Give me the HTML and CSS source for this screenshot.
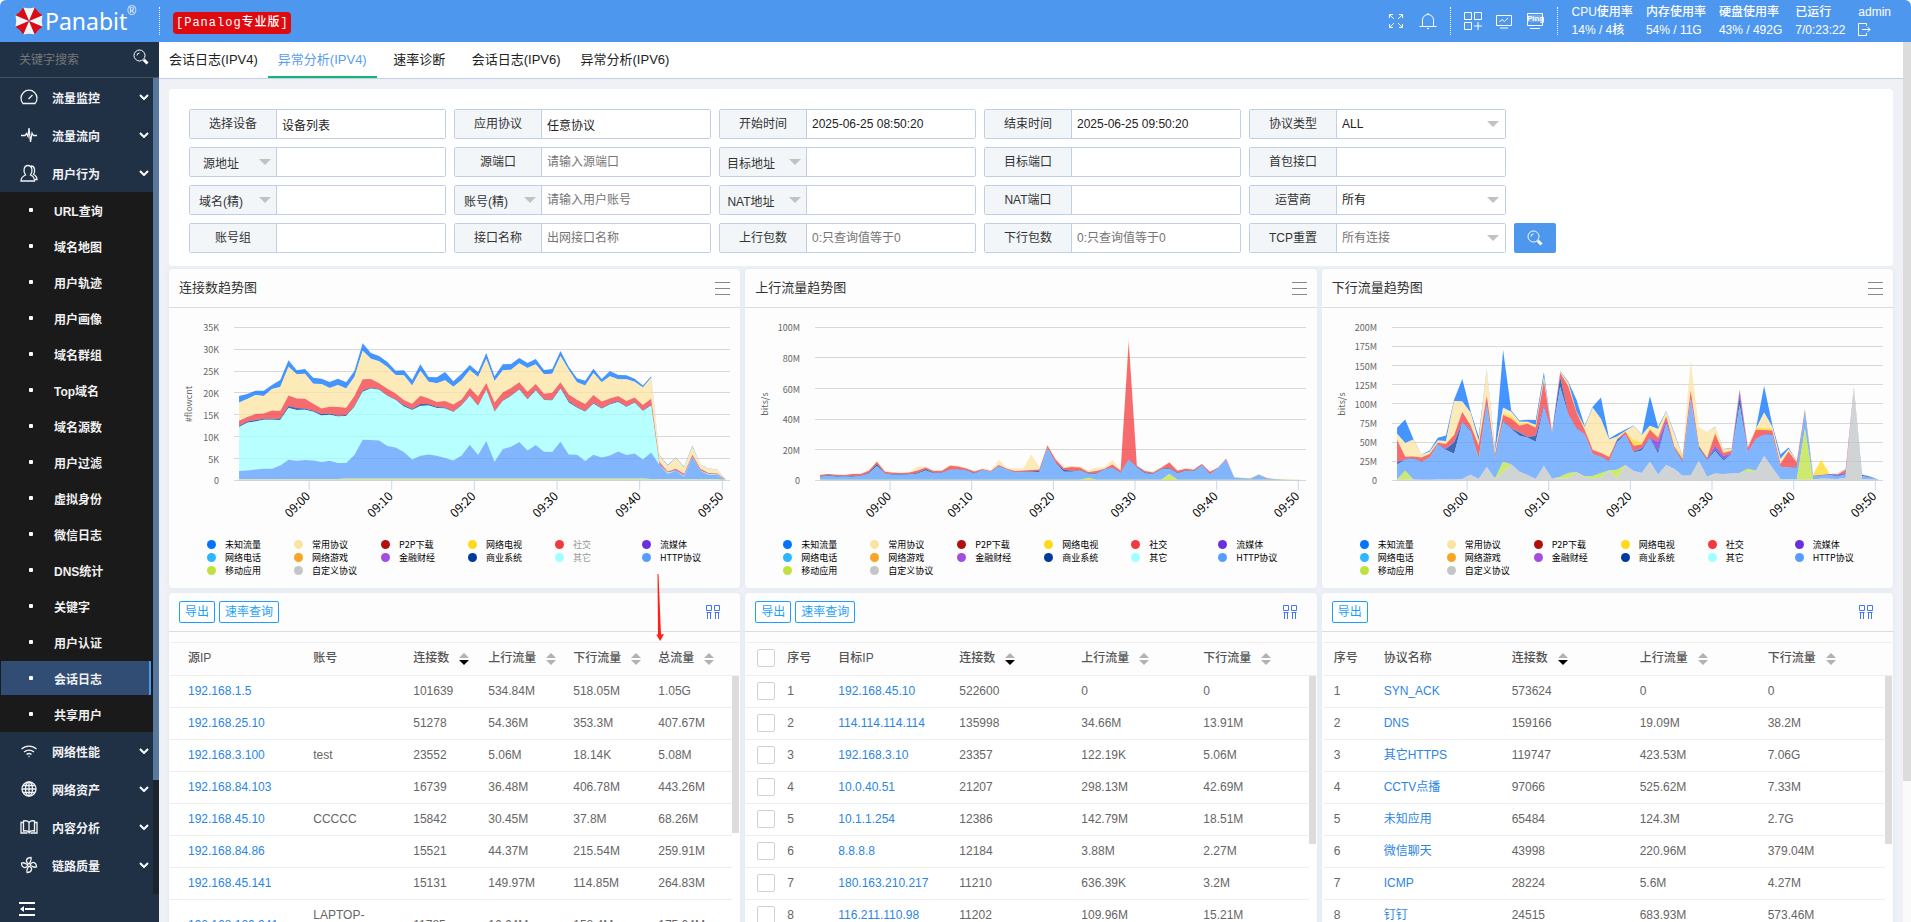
FILE: index.html
```html
<!DOCTYPE html>
<html lang="zh-CN">
<head>
    <meta charset="UTF-8">
    <meta name="viewport" content="width=device-width, initial-scale=1.0">
    <title>Panabit</title>
    <link rel="stylesheet" href="styles.css">
</head>
<body>
    <header class="header">
        <div class="logo">
            <svg class="logo-mark" viewBox="0 0 28 28">
                <g fill="#f4f4f4">
                    <path d="M14 14 8.2 0.5Q14 2 19.8 0.5z"/>
                    <path d="M14 14 27.5 8.2Q26 14 27.5 19.8z"/>
                    <path d="M14 14 19.8 27.5Q14 26 8.2 27.5z"/>
                    <path d="M14 14 0.5 19.8Q2 14 0.5 8.2z"/>
                </g>
                <g fill="#df0a10">
                    <path d="M14 14 8.2 0.5Q5.5 5.5 0.5 8.2z"/>
                    <path d="M14 14 19.8 0.5Q22.5 5.5 27.5 8.2z"/>
                    <path d="M14 14 27.5 19.8Q22.5 22.5 19.8 27.5z"/>
                    <path d="M14 14 8.2 27.5Q5.5 22.5 0.5 19.8z"/>
                </g>
            </svg>
            <span class="logo-name">Panabit</span><sup class="logo-reg">®</sup>
        </div>
        <div class="dots"></div>
        <span class="edition">[Panalog专业版]</span>
        <div class="header-tools">
            <svg class="tool" viewBox="0 0 18 18"><path d="M7 7 3 3M11 7l4-4M7 11l-4 4M11 11l4 4M2.5 6V2.500H6M12 2.500h3.500V6M2.500 12v3.500H6M12 15.500h3.500V12"/></svg>
            <svg class="tool tool-bell" viewBox="0 0 18 18"><path d="M0.500 14.500h17M3.500 14.500V8a5.500 5.500 0 0 1 11 0v6.500M9 2.500V1M8 16.500h2"/></svg>
            <div class="dots"></div>
            <svg class="tool tool-apps" viewBox="0 0 18 18"><path d="M0.500 0.500h7v7h-7zM10.500 0.500h7v7h-7zM0.500 10.500h7v7h-7zM14 10v8M10 14h8"/></svg>
            <svg class="tool tool-screen" viewBox="0 0 18 18"><path d="M1.500 3.500h15v10h-15zM5 16h8M4.500 10 7 7.500l2.500 2L13 6"/></svg>
            <svg class="tool tool-ping" viewBox="0 0 18 18"><path d="M1.500 1.500h15v12h-15zM4 16.500h10"/><path d="M1 3h16v7H1z" fill="#fff" stroke="none" opacity="0.2"/><text x="1" y="9">Ping</text></svg>
            <div class="dots"></div>
        </div>
        <dl class="status">
            <div><dt>CPU使用率</dt><dd>14% / 4核</dd></div>
            <div><dt>内存使用率</dt><dd>54% / 11G</dd></div>
            <div><dt>硬盘使用率</dt><dd>43% / 492G</dd></div>
            <div><dt>已运行</dt><dd>7/0:23:22</dd></div>
            <div><dt>admin</dt><dd><svg class="logout" viewBox="0 0 13 13"><path d="M8.500 3V0.500h-8v12h8V10M4 6.500h8M9.500 4l2.500 2.500L9.500 9"/></svg></dd></div>
        </dl>
    </header>

    <div class="layout">
        <aside class="sidebar">
            <div class="menu-search">
                <input type="text" placeholder="关键字搜索" aria-label="关键字搜索">
                <svg viewBox="0 0 16 16"><circle cx="6.500" cy="6.500" r="5.500"/><path d="M4 6.500A2.500 2.500 0 0 1 6.500 4"/><path class="handle" d="M10.800 10.800 14.500 14.500"/></svg>
            </div>
            <div class="menu-area">
                <nav class="menu">
                    <a class="menu-item" href="#"><svg class="menu-icon" viewBox="0 0 18 18"><path d="M3 15.500a8 8 0 1 1 12 0zM8.500 11l4-4"/></svg>流量监控<svg class="chevron" viewBox="0 0 10 6"><path d="M1 1l4 4 4-4"/></svg></a>
                    <a class="menu-item" href="#"><svg class="menu-icon" viewBox="0 0 18 18"><path d="M1 9.500h4l1.500-2 1.500 3L9 2l1.500 14 1.500-9 1.500 2.500H17"/></svg>流量流向<svg class="chevron" viewBox="0 0 10 6"><path d="M1 1l4 4 4-4"/></svg></a>
                    <a class="menu-item" href="#"><svg class="menu-icon" viewBox="0 0 18 18"><path d="M1 17c0-4 2-5 4.500-6C3 8 3.500 1.500 8 1.500s5 6.500 2.500 9.500c2.500 1 4 2 4 6zM11 2c4 0 4.500 5 2.500 8.500 2 1 3.500 2 3.500 5h-2"/></svg>用户行为<svg class="chevron" viewBox="0 0 10 6"><path d="M1 1l4 4 4-4"/></svg></a>
                    <ul class="submenu">
                        <li><a href="#">URL查询</a></li>
                        <li><a href="#">域名地图</a></li>
                        <li><a href="#">用户轨迹</a></li>
                        <li><a href="#">用户画像</a></li>
                        <li><a href="#">域名群组</a></li>
                        <li><a href="#">Top域名</a></li>
                        <li><a href="#">域名源数</a></li>
                        <li><a href="#">用户过滤</a></li>
                        <li><a href="#">虚拟身份</a></li>
                        <li><a href="#">微信日志</a></li>
                        <li><a href="#">DNS统计</a></li>
                        <li><a href="#">关键字</a></li>
                        <li><a href="#">用户认证</a></li>
                        <li><a class="active" href="#">会话日志</a></li>
                        <li><a href="#">共享用户</a></li>
                    </ul>
                    <a class="menu-item" href="#"><svg class="menu-icon" viewBox="0 0 18 18"><path d="M1.500 7a11 11 0 0 1 15 0M4 10a7.500 7.500 0 0 1 10 0M6.500 12.500a4 4 0 0 1 5 0M8.500 14.500h1"/></svg>网络性能<svg class="chevron" viewBox="0 0 10 6"><path d="M1 1l4 4 4-4"/></svg></a>
                    <a class="menu-item" href="#"><svg class="menu-icon" viewBox="0 0 18 18"><circle cx="9" cy="9" r="7"/><ellipse cx="9" cy="9" rx="3.500" ry="7"/><path d="M9 2v14M2 9h14M3 5.500h12M3 12.500h12"/></svg>网络资产<svg class="chevron" viewBox="0 0 10 6"><path d="M1 1l4 4 4-4"/></svg></a>
                    <a class="menu-item" href="#"><svg class="menu-icon" viewBox="0 0 18 18"><path d="M9 4.500C7.500 2.500 5.500 2.500 3.500 3v10c2-.5 4-.5 5.500 1.500zM9 4.500c1.500-2 3.500-2 5.500-1.500v10c-2-.5-4-.5-5.500 1.500M3.500 4.500H1V15h6.500M14.500 4.500H17V15h-6.500"/></svg>内容分析<svg class="chevron" viewBox="0 0 10 6"><path d="M1 1l4 4 4-4"/></svg></a>
                    <a class="menu-item" href="#"><svg class="menu-icon" viewBox="0 0 18 18"><circle cx="9" cy="9" r="1.500"/><path id="blade" d="M8.500 7.500C5 6 6 1.500 11 1.500 12 4 10.500 5 9.500 7.500"/><use href="#blade" transform="rotate(90 9 9)"/><use href="#blade" transform="rotate(180 9 9)"/><use href="#blade" transform="rotate(270 9 9)"/></svg>链路质量<svg class="chevron" viewBox="0 0 10 6"><path d="M1 1l4 4 4-4"/></svg></a>
                </nav>
                <div class="menu-scroll"><div class="menu-thumb"></div></div>
            </div>
            <div class="menu-fold">
                <svg viewBox="0 0 16 14"><path d="M0 1h16M6 7h10M0 13h16"/><path class="tip" d="M1 7l4-3v6z"/></svg>
            </div>
        </aside>

        <main class="main">
            <nav class="tabs">
                <a class="tab" href="#">会话日志(IPV4)</a>
                <a class="tab active" href="#">异常分析(IPV4)</a>
                <a class="tab" href="#">速率诊断</a>
                <a class="tab" href="#">会话日志(IPV6)</a>
                <a class="tab" href="#">异常分析(IPV6)</a>
            </nav>

            <div class="content">
                <form class="panel filter">
                    <div class="field"><label for="device">选择设备</label><input id="device" type="text" value="设备列表"></div>
                    <div class="field"><label for="app">应用协议</label><input id="app" type="text" value="任意协议"></div>
                    <div class="field"><label for="start">开始时间</label><input id="start" type="text" value="2025-06-25 08:50:20"></div>
                    <div class="field"><label for="end">结束时间</label><input id="end" type="text" value="2025-06-25 09:50:20"></div>
                    <div class="field"><label for="proto">协议类型</label><select id="proto"><option>ALL</option></select></div>

                    <div class="field"><select class="kind" id="srcKind" aria-label="源地址"><option>源地址</option></select><input type="text" aria-labelledby="srcKind"></div>
                    <div class="field"><label for="sport">源端口</label><input id="sport" type="text" placeholder="请输入源端口"></div>
                    <div class="field"><select class="kind" id="dstKind" aria-label="目标地址"><option>目标地址</option></select><input type="text" aria-labelledby="dstKind"></div>
                    <div class="field"><label for="dport">目标端口</label><input id="dport" type="text"></div>
                    <div class="field"><label for="first">首包接口</label><input id="first" type="text"></div>

                    <div class="field"><select class="kind" id="hostKind" aria-label="域名(精)"><option>域名(精)</option></select><input type="text" aria-labelledby="hostKind"></div>
                    <div class="field"><select class="kind" id="userKind" aria-label="账号(精)"><option>账号(精)</option></select><input type="text" placeholder="请输入用户账号" aria-labelledby="userKind"></div>
                    <div class="field"><select class="kind" id="natKind" aria-label="NAT地址"><option>NAT地址</option></select><input type="text" aria-labelledby="natKind"></div>
                    <div class="field"><label for="nport">NAT端口</label><input id="nport" type="text"></div>
                    <div class="field"><label for="isp">运营商</label><select id="isp"><option>所有</option></select></div>

                    <div class="field"><label for="group">账号组</label><input id="group" type="text"></div>
                    <div class="field"><label for="iface">接口名称</label><input id="iface" type="text" placeholder="出网接口名称"></div>
                    <div class="field"><label for="up">上行包数</label><input id="up" type="text" placeholder="0:只查询值等于0"></div>
                    <div class="field"><label for="down">下行包数</label><input id="down" type="text" placeholder="0:只查询值等于0"></div>
                    <div class="field"><label for="reset">TCP重置</label><select class="muted" id="reset"><option>所有连接</option></select></div>
                    <button class="search-btn" type="button" aria-label="查询">
                        <svg viewBox="0 0 16 16"><circle cx="6.500" cy="6.500" r="5.500"/><path d="M4 6.500A2.500 2.500 0 0 1 6.500 4"/><path class="handle" d="M10.800 10.800 14.500 14.500"/></svg>
                    </button>
                </form>

                <div class="row charts">
                    <section class="panel">
                        <div class="panel-head"><h2>连接数趋势图</h2><svg class="burger" viewBox="0 0 15 14"><path d="M0 1.500h15M0 7.500h15M0 13.500h15"/></svg></div>
                        <svg class="chart" id="flowChart" viewBox="0 0 571 230"></svg>
                        <ul class="legend dimmed"></ul>
                    </section>
                    <section class="panel">
                        <div class="panel-head"><h2>上行流量趋势图</h2><svg class="burger" viewBox="0 0 15 14"><path d="M0 1.500h15M0 7.500h15M0 13.500h15"/></svg></div>
                        <svg class="chart" id="upChart" viewBox="0 0 571 230"></svg>
                        <ul class="legend"></ul>
                    </section>
                    <section class="panel">
                        <div class="panel-head"><h2>下行流量趋势图</h2><svg class="burger" viewBox="0 0 15 14"><path d="M0 1.500h15M0 7.500h15M0 13.500h15"/></svg></div>
                        <svg class="chart" id="downChart" viewBox="0 0 571 230"></svg>
                        <ul class="legend"></ul>
                    </section>
                </div>

                <div class="row">
                    <section class="panel">
                        <div class="panel-head">
                            <button class="btn" type="button">导出</button>
                            <button class="btn" type="button">速率查询</button>
                            <svg class="columns" viewBox="0 0 14 14"><path d="M0.500 0.500h5v5h-5zM8.500 0.500h5v5h-5zM1.500 7.500V14M4.500 7.500V14M9.500 7.500V14M12.500 7.500V14M0.500 7.500h5M8.500 7.500h5"/></svg>
                        </div>
                        <div class="table-box">
                            <table class="table by-source">
                                <thead>
                                    <tr><th>源IP</th><th>账号</th><th>连接数<i class="sort desc"></i></th><th>上行流量<i class="sort"></i></th><th>下行流量<i class="sort"></i></th><th>总流量<i class="sort"></i></th></tr>
                                </thead>
                                <tbody>
                                    <tr><td><a href="#">192.168.1.5</a></td><td></td><td>101639</td><td>534.84M</td><td>518.05M</td><td>1.05G</td></tr>
                                    <tr><td><a href="#">192.168.25.10</a></td><td></td><td>51278</td><td>54.36M</td><td>353.3M</td><td>407.67M</td></tr>
                                    <tr><td><a href="#">192.168.3.100</a></td><td>test</td><td>23552</td><td>5.06M</td><td>18.14K</td><td>5.08M</td></tr>
                                    <tr><td><a href="#">192.168.84.103</a></td><td></td><td>16739</td><td>36.48M</td><td>406.78M</td><td>443.26M</td></tr>
                                    <tr><td><a href="#">192.168.45.10</a></td><td>CCCCC</td><td>15842</td><td>30.45M</td><td>37.8M</td><td>68.26M</td></tr>
                                    <tr><td><a href="#">192.168.84.86</a></td><td></td><td>15521</td><td>44.37M</td><td>215.54M</td><td>259.91M</td></tr>
                                    <tr><td><a href="#">192.168.45.141</a></td><td></td><td>15131</td><td>149.97M</td><td>114.85M</td><td>264.83M</td></tr>
                                    <tr><td><a href="#">192.168.120.241</a></td><td>LAPTOP-<br>&nbsp;</td><td>11785</td><td>16.64M</td><td>158.4M</td><td>175.04M</td></tr>
                                </tbody>
                            </table>
                            <div class="table-scroll"><div class="thumb short"></div></div>
                        </div>
                        <svg class="pointer" viewBox="0 0 10 67"><path d="M2.500 0 3.500 0 6 60.500 9 60 5.200 67 1.200 60.500 3 60.500z"/></svg>
                    </section>
                    <section class="panel">
                        <div class="panel-head">
                            <button class="btn" type="button">导出</button>
                            <button class="btn" type="button">速率查询</button>
                            <svg class="columns" viewBox="0 0 14 14"><path d="M0.500 0.500h5v5h-5zM8.500 0.500h5v5h-5zM1.500 7.500V14M4.500 7.500V14M9.500 7.500V14M12.500 7.500V14M0.500 7.500h5M8.500 7.500h5"/></svg>
                        </div>
                        <div class="table-box">
                            <table class="table by-target">
                                <thead>
                                    <tr><th><input type="checkbox" aria-label="全选"></th><th>序号</th><th>目标IP</th><th>连接数<i class="sort desc"></i></th><th>上行流量<i class="sort"></i></th><th>下行流量<i class="sort"></i></th></tr>
                                </thead>
                                <tbody>
                                    <tr><td><input type="checkbox" aria-label="1"></td><td>1</td><td><a href="#">192.168.45.10</a></td><td>522600</td><td>0</td><td>0</td></tr>
                                    <tr><td><input type="checkbox" aria-label="2"></td><td>2</td><td><a href="#">114.114.114.114</a></td><td>135998</td><td>34.66M</td><td>13.91M</td></tr>
                                    <tr><td><input type="checkbox" aria-label="3"></td><td>3</td><td><a href="#">192.168.3.10</a></td><td>23357</td><td>122.19K</td><td>5.06M</td></tr>
                                    <tr><td><input type="checkbox" aria-label="4"></td><td>4</td><td><a href="#">10.0.40.51</a></td><td>21207</td><td>298.13M</td><td>42.69M</td></tr>
                                    <tr><td><input type="checkbox" aria-label="5"></td><td>5</td><td><a href="#">10.1.1.254</a></td><td>12386</td><td>142.79M</td><td>18.51M</td></tr>
                                    <tr><td><input type="checkbox" aria-label="6"></td><td>6</td><td><a href="#">8.8.8.8</a></td><td>12184</td><td>3.88M</td><td>2.27M</td></tr>
                                    <tr><td><input type="checkbox" aria-label="7"></td><td>7</td><td><a href="#">180.163.210.217</a></td><td>11210</td><td>636.39K</td><td>3.2M</td></tr>
                                    <tr><td><input type="checkbox" aria-label="8"></td><td>8</td><td><a href="#">116.211.110.98</a></td><td>11202</td><td>109.96M</td><td>15.21M</td></tr>
                                </tbody>
                            </table>
                            <div class="table-scroll"><div class="thumb"></div></div>
                        </div>
                    </section>
                    <section class="panel">
                        <div class="panel-head">
                            <button class="btn" type="button">导出</button>
                            <svg class="columns" viewBox="0 0 14 14"><path d="M0.500 0.500h5v5h-5zM8.500 0.500h5v5h-5zM1.500 7.500V14M4.500 7.500V14M9.500 7.500V14M12.500 7.500V14M0.500 7.500h5M8.500 7.500h5"/></svg>
                        </div>
                        <div class="table-box">
                            <table class="table by-proto">
                                <thead>
                                    <tr><th>序号</th><th>协议名称</th><th>连接数<i class="sort desc"></i></th><th>上行流量<i class="sort"></i></th><th>下行流量<i class="sort"></i></th></tr>
                                </thead>
                                <tbody>
                                    <tr><td>1</td><td><a href="#">SYN_ACK</a></td><td>573624</td><td>0</td><td>0</td></tr>
                                    <tr><td>2</td><td><a href="#">DNS</a></td><td>159166</td><td>19.09M</td><td>38.2M</td></tr>
                                    <tr><td>3</td><td><a href="#">其它HTTPS</a></td><td>119747</td><td>423.53M</td><td>7.06G</td></tr>
                                    <tr><td>4</td><td><a href="#">CCTV点播</a></td><td>97066</td><td>525.62M</td><td>7.33M</td></tr>
                                    <tr><td>5</td><td><a href="#">未知应用</a></td><td>65484</td><td>124.3M</td><td>2.7G</td></tr>
                                    <tr><td>6</td><td><a href="#">微信聊天</a></td><td>43998</td><td>220.96M</td><td>379.04M</td></tr>
                                    <tr><td>7</td><td><a href="#">ICMP</a></td><td>28224</td><td>5.6M</td><td>4.27M</td></tr>
                                    <tr><td>8</td><td><a href="#">钉钉</a></td><td>24515</td><td>683.93M</td><td>573.46M</td></tr>
                                </tbody>
                            </table>
                            <div class="table-scroll"><div class="thumb"></div></div>
                        </div>
                    </section>
                </div>
            </div>
        </main>
        <div class="page-scroll"><div class="page-thumb"></div></div>
    </div>

    <script src="charts.js"></script>
</body>
</html>
```

FILE: styles.css
```css
* {
    box-sizing: border-box;
}
body {
    margin: 0;
    height: 100vh;
    display: flex;
    flex-direction: column;
    overflow: hidden;
    background-color: #fff;
    color: #333;
    font-family: "Liberation Sans", "Noto Sans CJK SC", sans-serif;
    font-size: 12px;
}
a {
    text-decoration: none;
}
ul, dl, dd, h2 {
    margin: 0;
    padding: 0;
}
ul {
    list-style: none;
}
svg {
    display: block;
    fill: none;
    flex: none;
}
input, select, button {
    font: inherit;
    color: inherit;
}

/* header */
.header {
    display: flex;
    align-items: center;
    flex: none;
    height: 42px;
    padding: 0 20px 0 15px;
    background-color: #4e97ee;
    border-radius: 6px 6px 0 0;
    color: #fff;
}
.logo {
    display: flex;
    align-items: center;
    width: 144px;
}
.logo-mark {
    width: 28px;
    height: 28px;
}
.logo-name {
    margin-left: 2px;
    font-family: "Noto Sans", sans-serif;
    font-size: 23px;
    line-height: 28px;
}
.logo-reg {
    align-self: flex-start;
    font-size: 12px;
    line-height: 8px;
}
.dots {
    width: 1px;
    height: 28px;
    border-left: 1px dotted #fff;
}
.edition {
    margin: 4px 0 0 13px;
    padding: 0 2px 0 3px;
    line-height: 22px;
    border-radius: 4px;
    background-color: #df0a10;
    font-family: "Liberation Mono", "Noto Sans CJK SC", monospace;
    font-weight: 500;
    letter-spacing: 1px;
}
.header-tools {
    display: flex;
    align-items: center;
    margin-left: auto;
}
.tool {
    width: 18px;
    height: 18px;
    stroke: #fff;
}
.tool-bell {
    margin: 0 13px 0 14px;
}
.tool-apps {
    margin-left: 13px;
}
.tool-screen {
    margin: 0 13px;
}
.tool-ping {
    margin-right: 13px;
}
.tool-ping text {
    fill: #fff;
    stroke: none;
    font-size: 8px;
    font-weight: bold;
}
.status {
    display: flex;
    gap: 13px;
    margin-left: 14px;
    padding-top: 2px;
    line-height: 18px;
}
.status dt, .status dd {
    height: 18px;
    font-weight: 500;
}
.logout {
    width: 13px;
    height: 13px;
    margin-top: 2px;
    stroke: #fff;
}

/* sidebar */
.layout {
    display: flex;
    flex: 1;
    min-height: 0;
}
.sidebar {
    display: flex;
    flex-direction: column;
    flex: none;
    width: 159px;
    background-color: #213145;
}
.menu-search {
    display: flex;
    align-items: center;
    flex: none;
    height: 36px;
    padding: 0 10px 0 19px;
    border-bottom: 1px solid #46535f;
}
.menu-search input {
    flex: 1;
    min-width: 0;
    padding: 0;
    border: none;
    background: none;
    outline: none;
}
.menu-search input::placeholder {
    color: #757575;
}
.menu-search svg, .search-btn svg {
    width: 16px;
    height: 16px;
    stroke: #fff;
}
.menu-search svg {
    margin-bottom: 5px;
}
.handle {
    stroke-width: 3;
}
.menu-area {
    display: flex;
    flex: 1;
    min-height: 0;
}
.menu {
    flex: 1;
    overflow: hidden;
    font-weight: bold;
}
.menu-item {
    display: flex;
    align-items: center;
    height: 38px;
    padding: 0 4px 0 20px;
    color: #f0f2f5;
}
.menu-icon {
    width: 18px;
    height: 18px;
    margin-right: 14px;
    stroke: #f0f2f5;
    stroke-width: 1.3;
}
.chevron {
    width: 10px;
    height: 6px;
    margin-left: auto;
    stroke: #fff;
    stroke-width: 2;
}
.submenu {
    background-color: #1a1a1a;
}
.submenu li {
    padding: 1px 2px 1px 1px;
}
.submenu a {
    display: flex;
    align-items: center;
    height: 34px;
    padding-left: 28px;
    color: #f0f0f0;
}
.submenu a::before {
    content: "";
    width: 4px;
    height: 4px;
    margin-right: 21px;
    border-radius: 1px;
    background-color: #fff;
}
.submenu .active {
    background-color: #314d73;
    border-right: 2px solid #4e97ee;
}
.menu-scroll {
    width: 6px;
    background-color: #1a242c;
}
.menu-thumb {
    height: 86%;
    background-color: #58789e;
}
.menu-fold {
    flex: none;
    height: 28px;
    padding: 8px 19px;
}
.menu-fold svg {
    width: 16px;
    height: 14px;
    stroke: #fff;
    stroke-width: 2;
}
.menu-fold .tip {
    fill: #fff;
    stroke: none;
}

/* tabs */
.main {
    display: flex;
    flex-direction: column;
    flex: 1;
    min-width: 0;
    overflow: hidden;
    background-color: #eff1f6;
}
.tabs {
    display: flex;
    flex: none;
    height: 37px;
    border-bottom: 1px solid #c0d0e6;
    background-color: #fff;
}
.tab {
    min-width: 85px;
    padding: 0 10px;
    color: #222;
    font-size: 13px;
    line-height: 35px;
    text-align: center;
}
.tab.active {
    color: #5a9cf0;
    border-bottom: 2px solid #15b573;
}

.content {
    display: flex;
    flex-direction: column;
    padding: 10px;
}
.panel {
    position: relative;
    border-radius: 4px;
    background-color: #fdfdfd;
    box-shadow: 0 0 5px #dde5f2;
}

/* filter form */
.filter {
    display: grid;
    grid-template-columns: repeat(5, 257px) 42px;
    gap: 8px;
    padding: 20px 20px 13px;
    background-color: #fff;
    box-shadow: none;
}
.field {
    display: flex;
    height: 30px;
    border: 1px solid #bfd0e6;
    border-radius: 2px;
}
.field:nth-child(5n + 1) {
    grid-column: 1;
}
.field label, .kind {
    flex: none;
    width: 87px;
    border: none;
    border-right: 1px solid #bfd0e6;
    background-color: #f2f6f9;
    line-height: 28px;
    text-align: center;
}
.field input, .field select {
    min-width: 0;
    padding: 0 5px;
    border-radius: 0;
    outline: none;
}
.field input, .field select:not(.kind) {
    flex: 1;
    border: none;
    background-color: #fff;
    color: #222;
}
.field input::placeholder, .field .muted:not(.kind) {
    color: #757575;
}
.field select {
    appearance: none;
    background-image: url("data:image/svg+xml,%3Csvg xmlns='http://www.w3.org/2000/svg' width='12' height='6'%3E%3Cpath d='M0 0h12L6 6z' fill='%23c2c2c2'/%3E%3C/svg%3E");
    background-repeat: no-repeat;
    background-position: right 6px top 11px;
}
.field .kind {
    padding: 2px 24px 0 0;
    background-position: right 5px top 11px;
    text-align-last: center;
}
.search-btn {
    height: 30px;
    padding: 0 13px;
    border: none;
    border-radius: 2px;
    background-color: #4e97ee;
    cursor: pointer;
}

/* three-column rows */
.row {
    display: grid;
    grid-template-columns: repeat(3, minmax(0, 1fr));
    gap: 5px;
    margin-top: 5px;
}
.row.charts {
    margin-top: 3px;
}
.panel-head {
    display: flex;
    align-items: center;
    gap: 4px;
    height: 39px;
    padding: 0 10px;
    border-bottom: 1px solid #dcdcdc;
}
.panel-head h2 {
    padding-bottom: 3px;
    font-size: 13px;
    font-weight: normal;
}
.burger {
    width: 15px;
    height: 14px;
    margin-left: auto;
    stroke: #888;
}
.columns {
    width: 14px;
    height: 14px;
    margin: 0 10px 0 auto;
    stroke: #4474ff;
}
.btn {
    height: 22px;
    padding: 0 5px;
    border: 1px solid #1e9fff;
    border-radius: 2px;
    background-color: #fff;
    color: #1e9fff;
    line-height: 20px;
    cursor: pointer;
}

/* charts */
.chart {
    width: 100%;
    font-family: "Noto Sans CJK SC", sans-serif;
    font-size: 9px;
}
.chart .grid {
    stroke: #d8d8d8;
    shape-rendering: crispEdges;
}
.chart .tick {
    stroke: #ccd6eb;
}
.chart .band {
    fill-opacity: 0.75;
}
.chart text {
    fill: #666;
}
.chart .time {
    fill: #000;
    font-size: 12px;
}
.legend {
    display: grid;
    grid-template-columns: repeat(6, 87px);
    padding: 0 0 11px 38px;
    color: #000;
    font-family: "Noto Sans CJK SC", sans-serif;
    font-size: 9px;
    line-height: 13px;
}
.legend li {
    display: flex;
    align-items: center;
}
.dot {
    width: 9px;
    height: 9px;
    margin-right: 9px;
    border-radius: 50%;
}
.dimmed li:nth-child(6n + 5) {
    color: #999;
}

/* tables */
.table-box {
    position: relative;
    margin: 10px 1px 0;
    min-height: 420px;
}
.table {
    width: 100%;
    border-collapse: separate;
    border-spacing: 0;
    border-top: 1px solid #eee;
    table-layout: fixed;
    color: #666;
}
.table th, .table td {
    padding: 5px 0 6px 11px;
    border-bottom: 1px solid #eee;
    line-height: 20px;
    text-align: left;
    white-space: nowrap;
}
.table td {
    background-color: #fff;
}
.table th {
    height: 33px;
    padding: 0 0 2px 11px;
    color: #555;
    font-weight: 500;
}
.table a {
    color: #2b85e4;
}
.by-source th, .by-source td {
    padding-left: 18px;
}
.by-source th:nth-child(1) { width: 22%; }
.by-source th:nth-child(2) { width: 100px; }
.by-source th:nth-child(3) { width: 75px; }
.by-source th:nth-child(4) { width: 85px; }
.by-source th:nth-child(5) { width: 85px; }
.by-target th:nth-child(1) { width: 30px; }
.by-target th:nth-child(2) { width: 51px; }
.by-target th:nth-child(3) { width: 121px; }
.by-target th:nth-child(4) { width: 122px; }
.by-target th:nth-child(5) { width: 122px; }
.by-proto th:nth-child(1) { width: 50px; }
.by-proto th:nth-child(2) { width: 128px; }
.by-proto th:nth-child(3) { width: 128px; }
.by-proto th:nth-child(4) { width: 128px; }
.table input {
    display: block;
    appearance: none;
    width: 18px;
    height: 18px;
    margin: 0;
    border: 1px solid #d2d2d2;
    border-radius: 2px;
    background-color: #fff;
}
.sort {
    display: inline-flex;
    flex-direction: column;
    gap: 2px;
    margin-left: 10px;
    vertical-align: middle;
}
.sort::before, .sort::after {
    content: "";
    border: 5px solid transparent;
}
.sort::before {
    border-top: none;
    border-bottom-color: #b2b2b2;
}
.sort::after {
    border-bottom: none;
    border-top-color: #b2b2b2;
}
.sort.desc::after {
    border-top-color: #000;
}
.table-scroll {
    position: absolute;
    top: 34px;
    right: 0;
    bottom: 0;
    width: 7px;
    background-color: #fff;
}
.thumb {
    height: 168px;
    background-color: #dcdcdc;
}
.thumb.short {
    height: 157px;
}
.pointer {
    position: absolute;
    top: -19px;
    left: 486px;
    width: 10px;
    height: 67px;
    fill: #ff2015;
}

.page-scroll {
    flex: none;
    width: 8px;
    background-color: #fafafa;
}
.page-thumb {
    height: 84%;
    background-color: #dcdcdc;
}
```

FILE: charts.js
```js
const groups = [
    ['未知流量', '#0672ff'], ['常用协议', '#fbe3a2'], ['P2P下载', '#b30f0f'], ['网络电视', '#ffd91a'], ['社交', '#f2393d'], ['流媒体', '#6a30e0'],
    ['网络电话', '#2db7ff'], ['网络游戏', '#f7a427'], ['金融财经', '#a24ee0'], ['商业系统', '#003a9b'], ['其它', '#a0ffff'], ['HTTP协议', '#579dff'],
    ['移动应用', '#bde23f'], ['自定义协议', '#c2c6c6']
];
const colors = Object.fromEntries(groups);

// Upper edge of every band, top band first, in thirds of a pixel.
// BASE is the zero line, TOP the highest grid line.
const TOP = 187;
const BASE = 646;

const flow = {
    '未知流量': [393,387,377,377,360,345,286,316,312,338,341,351,341,352,318,235,264,273,291,317,316,345,298,336,337,321,349,326,300,322,264,334,298,297,279,294,282,315,312,258,305,340,347,311,342,318,330,331,341,361,334,570,600,577,605,542,599,610,613,641],
    '常用协议': [412,402,390,393,372,366,305,328,326,356,357,369,360,370,336,257,281,289,306,330,331,361,317,350,355,346,365,346,315,336,281,348,316,314,295,309,298,328,326,273,314,352,361,324,352,334,343,343,350,367,338,571,602,579,607,545,600,611,614,641],
    '社交': [467,456,447,445,436,438,391,400,401,416,430,425,426,428,393,343,342,355,371,385,405,416,392,400,411,408,418,403,369,394,354,412,382,369,352,380,357,386,383,352,388,404,417,390,409,400,393,408,397,420,401,590,619,611,626,569,612,624,625,642],
    '商业系统': [482,469,465,461,461,460,423,429,430,437,447,445,451,450,422,376,368,372,391,403,420,432,417,417,426,427,439,419,391,421,373,438,406,391,371,401,374,403,404,369,408,426,438,414,429,416,408,424,411,436,419,596,622,615,631,574,616,626,627,643],
    '其它': [486,473,469,464,464,465,429,435,434,440,451,449,454,453,425,380,370,374,393,405,424,435,423,421,429,430,441,421,393,423,375,440,408,393,373,403,376,405,406,371,412,428,440,416,431,418,411,426,413,438,421,598,623,616,632,575,617,627,628,643],
    'HTTP协议': [618,616,613,611,611,601,584,587,585,586,591,587,594,594,570,524,525,526,543,547,561,583,572,568,572,579,586,571,539,570,528,590,552,545,531,556,540,560,561,530,568,569,588,569,577,571,559,570,565,583,562,599,626,617,634,576,618,629,630,643],
    '移动应用': Array.from({ length: 60 }, (_, i) => (i > 12 && i < 50 ? 640 : 642)),
    '自定义协议': Array.from({ length: 60 }, () => 643)
};

const up = {
    '常用协议': [629,626,628,629,626,625,615,586,618,621,623,621,604,604,616,616,599,603,608,617,610,615,585,608,610,610,568,606,538,582,606,602,604,616,607,606,585,614,216,600,616,618,606,590,615,608,612,595,620,606,580,636,638,639,627,638,641,642,643,644],
    '社交': [630,627,629,630,627,627,617,590,620,623,624,622,616,607,618,617,602,604,610,619,612,618,600,611,618,616,615,613,541,583,609,606,607,621,618,611,598,617,230,602,618,622,608,592,617,611,614,597,620,607,581,637,639,640,628,639,642,643,644,644],
    '商业系统': [634,630,633,632,633,631,624,596,626,627,628,626,624,612,623,622,613,613,615,624,614,620,603,613,621,620,619,617,547,592,614,617,616,624,625,612,607,622,584,605,622,625,611,609,623,616,617,600,627,608,584,637,639,641,629,640,642,643,644,644],
    'HTTP协议': [636,632,635,634,635,633,626,603,627,629,630,628,626,616,625,624,614,614,616,626,615,621,604,614,622,621,621,621,549,594,620,620,617,626,627,613,609,624,585,607,625,627,613,611,625,618,619,601,628,609,585,637,639,641,629,640,642,643,644,644],
    '移动应用': Array.from({ length: 60 }, (_, i) => ({ 33: 638, 43: 627 }[i] || 644)),
    '自定义协议': Array.from({ length: 60 }, () => 645)
};

const down = {
    '未知流量': [488,463,522,568,556,518,511,403,342,437,514,312,552,255,436,466,464,465,322,498,318,350,404,482,424,397,520,506,493,481,508,393,486,438,504,572,287,487,500,486,552,549,370,544,490,363,478,568,547,588,430,628,584,625,625,611,365,628,634,643],
    '常用协议': [506,534,523,569,560,526,528,408,409,442,528,314,560,428,440,470,470,480,336,500,320,354,440,486,428,462,523,514,498,483,510,482,492,440,508,574,288,487,500,487,553,550,371,546,491,442,485,582,552,589,432,629,584,625,626,612,366,629,635,643],
    '网络电视': [522,574,573,576,566,532,535,508,440,478,540,390,568,446,452,476,474,484,346,502,322,360,440,492,554,562,574,520,499,525,532,488,514,448,542,572,374,540,574,500,560,554,373,548,488,489,490,595,557,591,434,630,584,626,627,613,367,629,635,643],
    '社交': [524,575,574,577,567,533,537,510,441,480,541,392,570,450,460,482,476,488,348,503,323,364,442,494,555,564,576,522,500,542,538,494,518,454,545,582,376,542,578,506,564,558,374,549,494,495,496,596,559,592,436,632,630,627,628,614,368,630,636,643],
    '流媒体': [590,582,579,589,577,537,550,530,471,493,579,412,575,467,489,501,515,511,420,503,334,447,489,507,567,574,588,522,509,559,548,518,530,466,549,588,400,544,582,542,572,566,380,560,521,509,507,604,607,605,440,632,630,627,628,624,369,629,635,643],
    '商业系统': [592,583,580,590,578,538,552,532,472,494,580,414,576,468,490,502,516,512,428,504,336,448,490,508,568,575,590,524,510,560,550,520,558,474,550,590,402,546,584,552,580,568,396,562,522,510,509,605,608,606,442,633,631,628,632,628,370,630,636,643],
    'HTTP协议': [598,584,582,591,578,539,555,566,472,498,580,420,580,470,492,512,518,530,428,505,366,450,492,508,568,576,591,530,510,562,556,520,566,476,552,592,402,550,586,558,586,568,420,562,522,510,510,605,608,608,445,634,632,630,634,628,371,633,637,643],
    '移动应用': [643,617,643,644,644,643,643,643,642,629,642,606,640,590,598,620,630,642,603,641,635,624,621,634,633,624,616,614,600,618,624,590,628,600,612,632,631,588,635,625,627,625,624,611,617,573,608,642,642,643,490,643,640,641,642,638,372,642,643,644],
    '自定义协议': [643,643,643,644,644,643,643,643,642,629,642,606,642,622,598,620,630,642,603,641,640,640,622,638,640,638,618,641,600,618,624,590,628,600,612,632,633,588,635,627,627,625,624,620,619,573,608,642,642,643,644,644,641,641,642,638,372,642,643,644]
};

const toY = value => (value - 129) / 3;

function drawChart(id, series, opts) {
    const step = (opts.to - opts.from) / 59;
    const names = Object.keys(series);
    let html = '';

    opts.labels.forEach((label, i) => {
        const y = toY(BASE - (BASE - TOP) * i / (opts.labels.length - 1));
        html += `<line class="grid" x1="${opts.left}" x2="561" y1="${y}" y2="${y}"/>`;
        html += `<text x="${opts.left - 15}" y="${y + 4}" text-anchor="end">${label}</text>`;
    });

    names.forEach((name, n) => {
        const lower = series[names[n + 1]];
        const upper = series[name].map((v, i) => `${opts.from + i * step},${toY(v)}`);
        const under = series[name].map((v, i) => `${opts.from + i * step},${toY(lower ? Math.max(v, lower[i]) : BASE)}`);
        html += `<polygon class="band" fill="${colors[name]}" points="${upper.concat(under.reverse()).join(' ')}"/>`;
    });

    for (let i = 0; i < 6; i++) {
        const x = opts.tick + i * opts.gap;
        html += `<line class="tick" x1="${x}" x2="${x}" y1="173" y2="182"/>`;
        html += `<text class="time" text-anchor="end" transform="translate(${x + 2} 189) rotate(-45)">09:${i}0</text>`;
    }

    html += `<text text-anchor="middle" transform="translate(23 ${opts.titleY}) rotate(-90)">${opts.title}</text>`;
    document.getElementById(id).innerHTML = html;
}

drawChart('flowChart', flow, {
    left: 65, from: 70, to: 556, tick: 140, gap: 82.6, title: '#flowcnt', titleY: 96,
    labels: ['0', '5K', '10K', '15K', '20K', '25K', '30K', '35K']
});
drawChart('upChart', up, {
    left: 70, from: 75, to: 554, tick: 145, gap: 81.6, title: 'bits/s', titleY: 96,
    labels: ['0', '20M', '40M', '60M', '80M', '100M']
});
drawChart('downChart', down, {
    left: 70, from: 75, to: 556, tick: 145, gap: 81.6, title: 'bits/s', titleY: 96,
    labels: ['0', '25M', '50M', '75M', '100M', '125M', '150M', '175M', '200M']
});

document.querySelectorAll('.legend').forEach(legend => {
    legend.innerHTML = groups.map(([name, color]) =>
        `<li><span class="dot" style="background-color: ${color}"></span>${name}</li>`).join('');
});
```
